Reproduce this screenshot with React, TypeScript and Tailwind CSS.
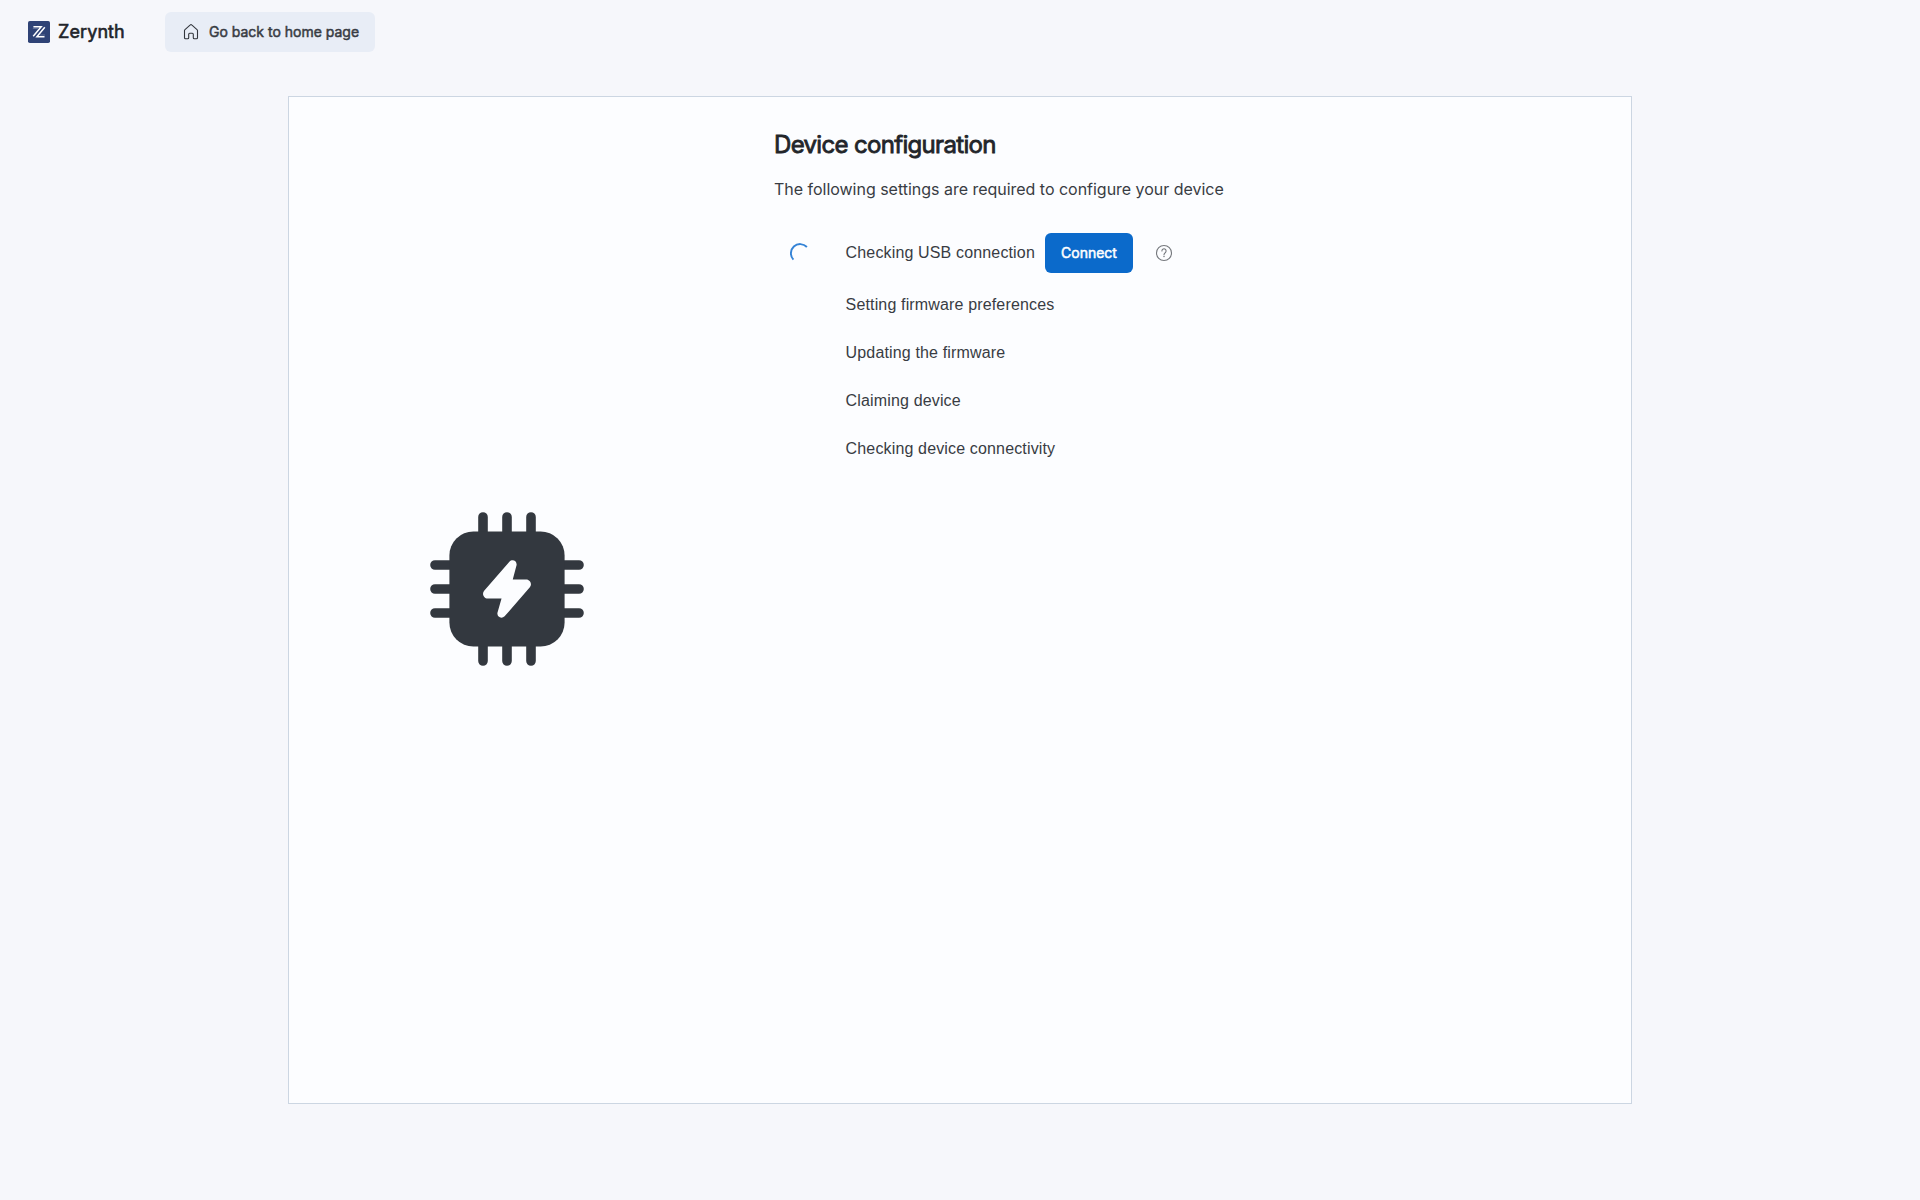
const STEPS = [
  'Setting firmware preferences',
  'Updating the firmware',
  'Claiming device',
  'Checking device connectivity',
];

function Logo() {
  return (
    <svg className="size-[22px]" viewBox="0 0 22 22" fill="none">
      <rect width="22" height="22" rx="1.8" fill="#2f4376" />
      <g stroke="#fff" strokeLinejoin="miter">
        <path d="M5.400 5.800h7.800L5.200 15.200" strokeWidth="1.500" />
        <path d="M16.800 6.200L8.900 15.700h7.600" strokeWidth="1.500" />
        <path d="M4.800 7.500h5M12 14h5" strokeWidth=".6" opacity=".4" />
      </g>
    </svg>
  );
}

function HomeIcon() {
  return (
    <svg className="size-[18px]" viewBox="0 0 18 18" fill="none" stroke="#33373d" strokeWidth="1.100" strokeLinejoin="round">
      <path d="M2.500 7.600c0-.4.200-.7.500-1L8.300 1.900c.4-.4 1-.4 1.400 0L15 6.600c.3.300.5.600.5 1v7.200c0 .6-.4 1-1 1h-2.200c-.6 0-1-.4-1-1v-3.500c0-.6-.4-1-1-1H7.700c-.6 0-1 .4-1 1v3.500c0 .6-.4 1-1 1H3.500c-.6 0-1-.4-1-1z" />
    </svg>
  );
}

function HelpIcon() {
  return (
    <svg className="size-5" viewBox="0 0 20 20" fill="none" stroke="#75787d" strokeWidth="1.100">
      <circle cx="10" cy="10" r="7.500" />
      <path d="M7.900 8a2.100 2.100 0 1 1 3.500 1.500C10.500 10.300 10 10.700 10 11.700" strokeLinecap="round" />
      <circle cx="10" cy="13.600" r=".75" fill="#75787d" stroke="none" />
    </svg>
  );
}

function Spinner() {
  return (
    <svg className="size-5" viewBox="0 0 20 20" fill="none" stroke="#3483d6" strokeWidth="1.900">
      <path d="M3.400 16.600A9.200 9.200 0 0 1 16.900 4" />
    </svg>
  );
}

function ChipIcon() {
  return (
    <svg className="size-48" viewBox="0 0 20 20" fill="#33383f">
      <path
        d="M7.500 2.500v15M10 2.500v15M12.500 2.500v15M2.500 7.500h15M2.500 10h15M2.500 12.500h15"
        stroke="#33383f"
        strokeLinecap="round"
      />
      <rect x="4" y="4" width="12" height="12" rx="2.500" />
      <path
        d="M10.250 7.150c.3-.3.8-.1.750.350L10.600 9h1.400c.420 0 .650.500.380.820L9.750 12.850c-.3.3-.8.100-.75-.35L9.430 11H8c-.42 0-.65-.5-.38-.820z"
        fill="#fcfdff"
      />
    </svg>
  );
}

export default function App() {
  return (
    <div className="flex h-[1200px] w-[1920px] flex-col bg-[#f6f7fb] font-['Inter',sans-serif] text-[#383c43]">
      <header className="flex h-16 items-center pl-7">
        <Logo />
        <span className="ml-2 w-[97px] text-lg tracking-[0.1px] text-[#22252a] [-webkit-text-stroke:0.6px]">Zerynth</span>
        <button className="ml-2.5 flex h-10 w-[210px] items-center gap-[9px] rounded-md bg-[#e8edf6] pl-[17px] text-sm whitespace-nowrap">
          <HomeIcon />
          <span className="[-webkit-text-stroke:0.5px]">Go back to home page</span>
        </button>
      </header>
      <main className="mx-auto mt-8 flex h-[1008px] w-[1344px] border border-[#ccd6e2] bg-[#fcfdff]">
        <div className="flex w-[436px] justify-center pt-[396px]">
          <ChipIcon />
        </div>
        <section className="ml-[49px] flex flex-col items-start">
          <h1 className="mt-8 text-2xl leading-8 tracking-[-0.67px] text-[#22252a] [-webkit-text-stroke:0.8px]">Device configuration</h1>
          <p className="mt-4 text-base leading-6 tracking-[-0.02px]">The following settings are required to configure your device</p>
          <div className="mt-8 flex h-10 items-center font-['Liberation_Sans',sans-serif] text-base tracking-[0.15px]">
            <div className="flex w-[71.600px] pl-4">
              <Spinner />
            </div>
            <span className="w-[189.400px]">Checking USB connection</span>
            <button className="ml-2.5 h-10 w-[88px] rounded-md bg-[#0b6acb] font-['Inter',sans-serif] text-sm tracking-normal text-white [-webkit-text-stroke:0.5px]">
              Connect
            </button>
            <span className="ml-[21px]">
              <HelpIcon />
            </span>
          </div>
          <ul className="mt-2 pl-[71.600px] font-['Liberation_Sans',sans-serif] text-base tracking-[0.15px]">
            {STEPS.map((step) => (
              <li key={step} className="flex h-12 items-center">
                {step}
              </li>
            ))}
          </ul>
        </section>
      </main>
    </div>
  );
}
